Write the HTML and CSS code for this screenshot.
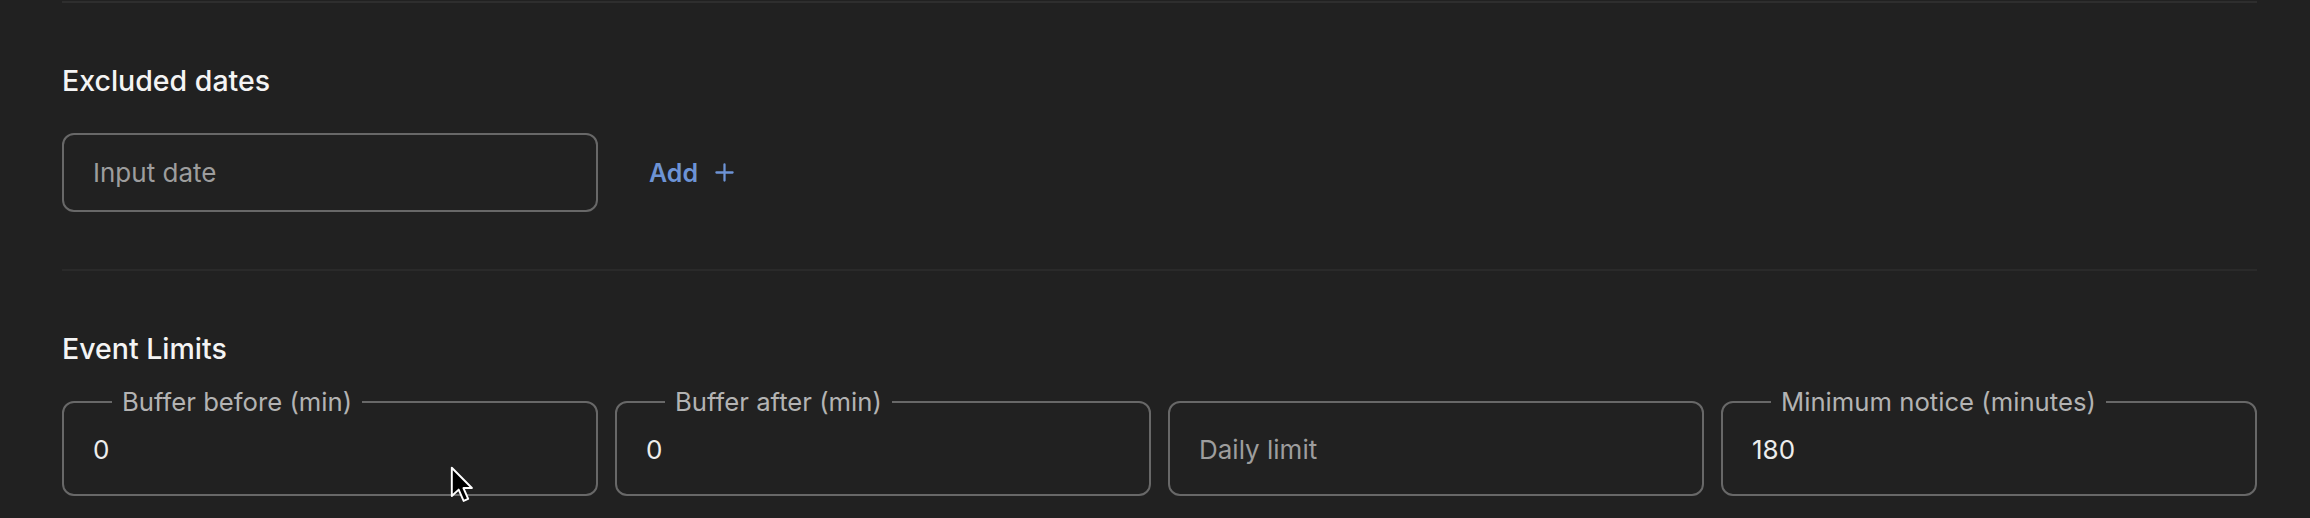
FILE: index.html
```html
<!DOCTYPE html>
<html lang="en">
<head>
<meta charset="utf-8">
<title>Event settings</title>
<link rel="stylesheet" href="styles.css">
</head>
<body>
<div class="page">
  <div class="rule rule-top"></div>

  <section class="section section-dates">
    <h2 class="section-title">Excluded dates</h2>
    <div class="date-row">
      <div class="date-box">
        <input class="field-input" type="text" placeholder="Input date">
      </div>
      <button class="add-btn" type="button">
        <span>Add</span>
        <svg class="add-icon" viewBox="0 0 20 20" width="20" height="20" aria-hidden="true">
          <path d="M10 1.5V18.5M1.5 10H18.5" stroke="currentColor" stroke-width="2.4" stroke-linecap="round" fill="none"/>
        </svg>
      </button>
    </div>
  </section>

  <div class="rule"></div>

  <section class="section section-limits">
    <h2 class="section-title">Event Limits</h2>
    <div class="limits-grid">
      <fieldset class="field">
        <legend class="field-label">Buffer before (min)</legend>
        <div class="field-body field-body-legend">
          <input class="field-input" type="text" value="0">
        </div>
      </fieldset>
      <fieldset class="field">
        <legend class="field-label">Buffer after (min)</legend>
        <div class="field-body field-body-legend">
          <input class="field-input" type="text" value="0">
        </div>
      </fieldset>
      <fieldset class="field">
        <div class="field-body field-body-plain">
          <input class="field-input" type="text" placeholder="Daily limit">
        </div>
      </fieldset>
      <fieldset class="field">
        <legend class="field-label">Minimum notice (minutes)</legend>
        <div class="field-body field-body-legend">
          <input class="field-input" type="text" value="180">
        </div>
      </fieldset>
    </div>
  </section>
</div>

<svg class="cursor" viewBox="0 0 13 21" width="23" height="37" aria-hidden="true">
  <path d="M1 1 L1 17 L4.9 13.4 L7.7 19.8 L10.3 18.7 L7.6 12.5 L12.4 12.5 Z" fill="#000" stroke="#fff" stroke-width="1.1" stroke-linejoin="round"/>
</svg>
</body>
</html>
```

FILE: styles.css
```css
html, body {
  margin: 0;
  padding: 0;
  background: #212121;
}

body {
  font-family: Inter, "Noto Sans", "Liberation Sans", sans-serif;
  color: #f2f2f2;
  height: 518px;
  overflow: hidden;
}

.page {
  padding: 0 53px 0 62px;
}

.rule {
  height: 2px;
  background: #2a2a2a;
}

.rule-top {
  margin-top: 1px;
  background: #2e2e2e;
}

.section {
  padding-top: 62px;
}

.section-dates {
  padding-bottom: 57px;
}

.section-title {
  margin: 0;
  font-size: 28.5px;
  line-height: 32px;
  font-weight: 500;
  color: #f4f4f4;
  letter-spacing: 0;
}

.date-row {
  margin-top: 36px;
  display: flex;
  align-items: center;
  gap: 51px;
}

.date-box {
  box-sizing: border-box;
  width: 536px;
  height: 79px;
  border: 2px solid #686868;
  border-radius: 12px;
  padding: 0 29px;
  display: flex;
  align-items: center;
}

.field-input {
  box-sizing: border-box;
  width: 100%;
  height: 30px;
  margin: 0;
  padding: 0;
  border: 0;
  outline: none;
  background: transparent;
  font-family: inherit;
  font-size: 26px;
  color: #ededed;
}

.field-input::placeholder {
  color: #9d9d9d;
  opacity: 1;
}

.add-btn {
  display: flex;
  align-items: center;
  gap: 17px;
  margin: 0;
  padding: 0;
  border: 0;
  background: transparent;
  font-family: inherit;
  font-size: 25px;
  line-height: 30px;
  font-weight: 600;
  color: #6d93d5;
  cursor: pointer;
}

.add-icon {
  display: block;
  width: 19px;
  height: 19px;
}

.limits-grid {
  margin-top: 25px;
  display: grid;
  grid-template-columns: repeat(4, 1fr);
  gap: 17px;
  align-items: end;
}

.field {
  box-sizing: border-box;
  margin: 0;
  padding: 0;
  min-width: 0;
  border: 2px solid #686868;
  border-radius: 12px;
}

.field-label {
  margin-left: 48px;
  padding: 0 10px;
  font-size: 25.7px;
  line-height: 24px;
  color: #b3b3b3;
}

.field-body {
  padding-left: 29px;
  padding-right: 29px;
}

.field-body-legend {
  padding-top: 20px;
  padding-bottom: 30px;
}

.field-body-plain {
  padding-top: 31px;
  padding-bottom: 30px;
}

.cursor {
  position: absolute;
  left: 450px;
  top: 466px;
}
```
